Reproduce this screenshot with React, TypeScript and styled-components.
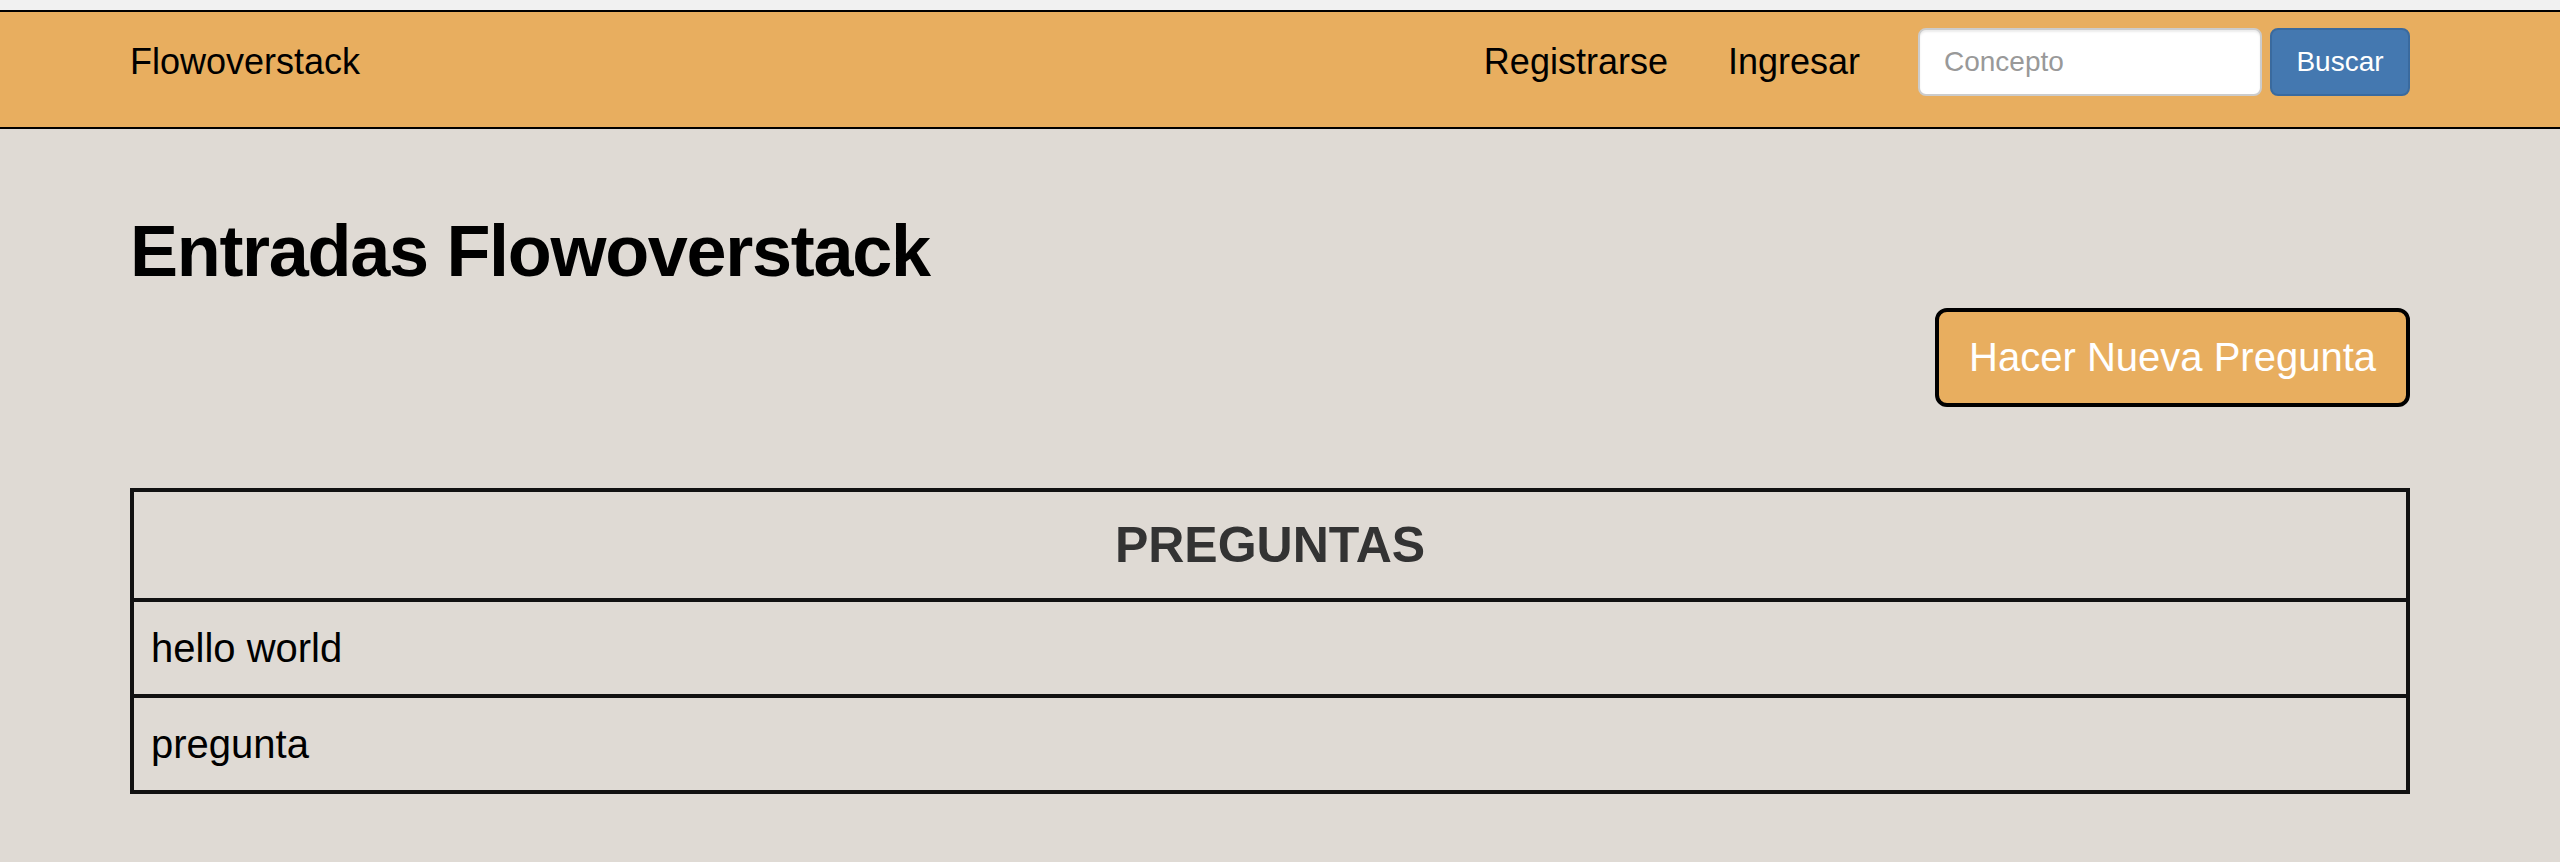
import styled, { createGlobalStyle } from "styled-components";

const GlobalStyle = createGlobalStyle`
    html, body {
        margin: 0;
        padding: 0;
        background: #dfdad4;
        font-family: "Liberation Sans", Arial, Helvetica, sans-serif;
        color: #000;
    }
    * {
        box-sizing: border-box;
    }
`;

const TopStrip = styled.div`
    height: 10px;
    background: #f1f1f1;
`;

const Navbar = styled.nav`
    background: #e8ae5f;
    border-top: 2px solid #000;
    border-bottom: 2px solid #000;
    padding-bottom: 15px;
`;

const Container = styled.div`
    padding: 0 150px 0 130px;
`;

const NavInner = styled(Container)`
    height: 100px;
    display: flex;
    align-items: center;
`;

const Brand = styled.a`
    font-size: 36px;
    line-height: 40px;
    color: #000;
    text-decoration: none;
`;

const NavLinks = styled.ul`
    margin: 0 0 0 auto;
    padding: 0;
    list-style: none;
    display: flex;
    align-items: center;
`;

const NavLink = styled.a`
    display: block;
    padding: 0 30px;
    font-size: 36px;
    line-height: 40px;
    color: #000;
    text-decoration: none;
`;

const SearchForm = styled.form`
    display: flex;
    gap: 8px;
    margin-left: 28px;
`;

const SearchInput = styled.input`
    width: 344px;
    height: 68px;
    padding: 0 24px;
    font-family: inherit;
    font-size: 28px;
    color: #555;
    background: #fff;
    border: 2px solid #ccc;
    border-radius: 8px;
    box-shadow: inset 0 2px 2px rgba(0, 0, 0, 0.075);
    outline: none;

    &::placeholder {
        color: #999;
    }
`;

const SearchButton = styled.button`
    width: 140px;
    height: 68px;
    font-family: inherit;
    font-size: 28px;
    color: #fff;
    background: #4478b0;
    border: 2px solid #3a6a9e;
    border-radius: 8px;
    cursor: pointer;
`;

const Main = styled(Container)`
    padding-top: 82px;
    padding-bottom: 60px;
`;

const Title = styled.h1`
    margin: 0;
    font-size: 72px;
    line-height: 80px;
    font-weight: bold;
    letter-spacing: -1.3px;
`;

const Actions = styled.div`
    display: flex;
    justify-content: flex-end;
    margin-top: 17px;
`;

const AskButton = styled.button`
    height: 99px;
    padding: 0 30px;
    font-family: inherit;
    font-size: 40px;
    color: #fff;
    background: #e8ae5f;
    border: 4px solid #000;
    border-radius: 12px;
    cursor: pointer;
`;

const Table = styled.table`
    width: 100%;
    margin-top: 81px;
    border-collapse: collapse;
    border: 4px solid #111;
`;

const HeadCell = styled.th`
    height: 110px;
    padding: 0 16px;
    border: 4px solid #111;
    font-size: 50px;
    font-weight: bold;
    color: #333;
    text-align: center;
`;

const Cell = styled.td`
    height: 96px;
    padding: 0 17px;
    border: 4px solid #111;
    font-size: 40px;
    color: #000;
`;

const questions = ["hello world", "pregunta"];

export default function App() {
    return (
        <>
            <GlobalStyle />
            <TopStrip />
            <Navbar>
                <NavInner>
                    <Brand href="#">Flowoverstack</Brand>
                    <NavLinks>
                        <li><NavLink href="#">Registrarse</NavLink></li>
                        <li><NavLink href="#">Ingresar</NavLink></li>
                    </NavLinks>
                    <SearchForm onSubmit={(e) => e.preventDefault()}>
                        <SearchInput placeholder="Concepto" />
                        <SearchButton type="submit">Buscar</SearchButton>
                    </SearchForm>
                </NavInner>
            </Navbar>

            <Main>
                <Title>Entradas Flowoverstack</Title>
                <Actions>
                    <AskButton>Hacer Nueva Pregunta</AskButton>
                </Actions>

                <Table>
                    <thead>
                        <tr><HeadCell>PREGUNTAS</HeadCell></tr>
                    </thead>
                    <tbody>
                        {questions.map((q) => (
                            <tr key={q}><Cell>{q}</Cell></tr>
                        ))}
                    </tbody>
                </Table>
            </Main>
        </>
    );
}
